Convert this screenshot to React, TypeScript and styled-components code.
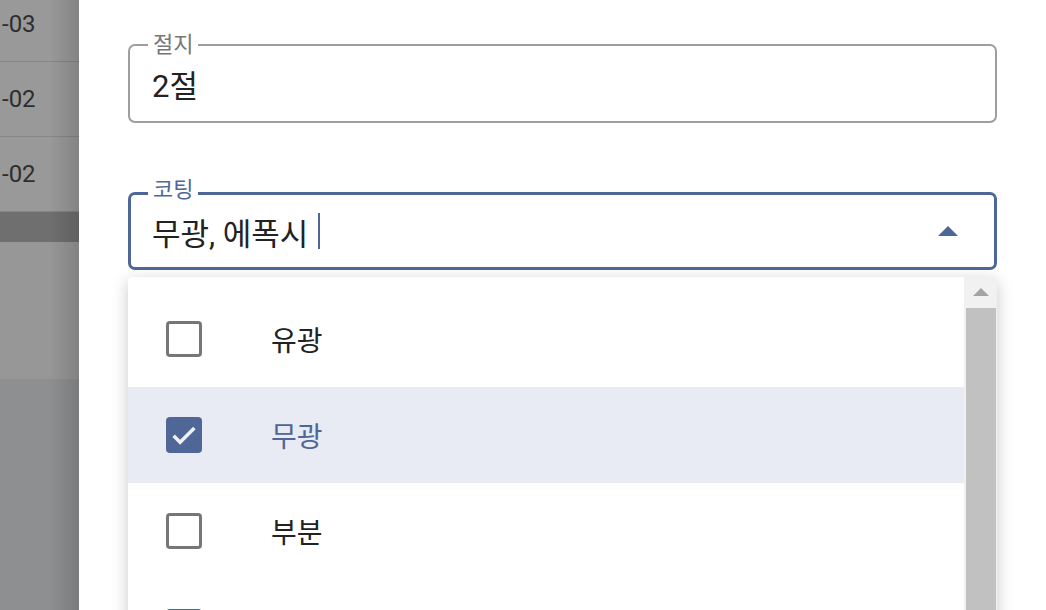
import React from "react";
import styled, {createGlobalStyle, css} from "styled-components";

const GlobalStyle = createGlobalStyle`
  html, body {
    margin: 0;
    padding: 0;
    width: 1046px;
    height: 610px;
    overflow: hidden;
    background: #ffffff;
    font-family: Roboto, "Noto Sans CJK KR", "Noto Sans", sans-serif;
  }
`

const Page = styled.div`
  display: flex;
  width: 1046px;
  height: 610px;
  overflow: hidden;
`

// table behind the drawer, dimmed by the backdrop
const Backdrop = styled.div`
  position: relative;
  width: 79px;
  flex-shrink: 0;
  display: flex;
  flex-direction: column;
  background: #8e8f91;
  overflow: hidden;

  &::after {
    content: "";
    position: absolute;
    top: 0;
    bottom: 0;
    right: 0;
    width: 30px;
    background: linear-gradient(to right, rgba(0, 0, 0, 0), rgba(0, 0, 0, 0.14));
  }
`
const TableRow = styled.div`
  height: 74px;
  flex-shrink: 0;
  display: flex;
  align-items: center;
  padding-left: 2px;
  background: #999999;
  border-bottom: 1px solid #878787;
  font-size: 24px;
  color: #2e2e2e;
  white-space: nowrap;
  ${({first}: any) => first && css`
    margin-top: -13px;
  `};
`
const TableFooter = styled.div`
  height: 30px;
  flex-shrink: 0;
  background: #6f6f6f;
`
const TableEmpty = styled.div`
  height: 137px;
  flex-shrink: 0;
  background: #979797;
`

const Drawer = styled.div`
  position: relative;
  flex: 1;
  background: #ffffff;
  padding: 44px 49px 0 49px;
  display: flex;
  flex-direction: column;
  gap: 69px;
`

const Field = styled.div`
  position: relative;
  box-sizing: border-box;
  height: ${({focused}: any) => focused ? 78 : 79}px;
  border: ${({focused}: any) => focused ? "3px solid #4f6796" : "2px solid #9e9e9e"};
  border-radius: 7px;
  display: flex;
  align-items: center;
  padding: 0 34px 0 ${({focused}: any) => focused ? 21 : 22}px;
  font-size: 31px;
  color: #222222;
`
const FieldLabel = styled.span`
  position: absolute;
  top: ${({focused}: any) => focused ? -18 : -14}px;
  left: ${({focused}: any) => focused ? 17 : 18}px;
  padding: 0 5px;
  background: #ffffff;
  font-size: 22px;
  line-height: 26px;
  color: ${({focused}: any) => focused ? "#4f6796" : "#767676"};
`
const Value = styled.span`
  flex: 1;
  display: flex;
  align-items: center;
`
const Caret = styled.span`
  display: inline-block;
  width: 2px;
  height: 36px;
  margin-left: 10px;
  background: #4f6796;
`
const Arrow = styled.span`
  width: 0;
  height: 0;
  border-left: 10px solid transparent;
  border-right: 10px solid transparent;
  border-bottom: 10px solid #4f6796;
  margin-right: 2px;
`

const Menu = styled.div`
  position: absolute;
  top: 277px;
  left: 49px;
  right: 49px;
  height: 360px;
  background: #ffffff;
  box-shadow: 0 4px 16px rgba(0, 0, 0, 0.22);
  border-radius: 4px 4px 0 0;
  display: flex;
  z-index: 2;
`
const MenuList = styled.div`
  flex: 1;
  padding-top: 14px;
  display: flex;
  flex-direction: column;
`
const Option = styled.div`
  height: 96px;
  flex-shrink: 0;
  display: flex;
  align-items: center;
  gap: 69px;
  padding-left: 38px;
  font-size: 28px;
  color: ${({selected}: any) => selected ? "#4f6796" : "#222222"};
  background: ${({selected}: any) => selected ? "#e8ebf4" : "transparent"};
`
const Box = styled.span`
  box-sizing: border-box;
  width: 36px;
  height: 36px;
  border-radius: 4px;
  border: ${({checked}: any) => checked ? "none" : "3px solid #767676"};
  background: ${({checked}: any) => checked ? "#4f6796" : "#ffffff"};
  display: flex;
  align-items: center;
  justify-content: center;
  flex-shrink: 0;
`
const Scrollbar = styled.div`
  width: 33px;
  background: #f1f1f1;
  display: flex;
  flex-direction: column;
  align-items: center;
  border-radius: 0 4px 0 0;
`
const ScrollUp = styled.span`
  width: 0;
  height: 0;
  margin: 11px 0 12px;
  border-left: 8px solid transparent;
  border-right: 8px solid transparent;
  border-bottom: 8px solid #a3a3a3;
`
const Thumb = styled.div`
  width: 30px;
  flex: 1;
  background: #c1c1c1;
`

const options = [
    {label: "유광", checked: false},
    {label: "무광", checked: true},
    {label: "부분", checked: false},
    {label: "에폭시", checked: true},
]

const App = () => {
    return <Page>
        <GlobalStyle/>
        <Backdrop>
            <TableRow first>-03</TableRow>
            <TableRow>-02</TableRow>
            <TableRow>-02</TableRow>
            <TableFooter/>
            <TableEmpty/>
        </Backdrop>
        <Drawer>
            <Field>
                <FieldLabel>절지</FieldLabel>
                <Value>2절</Value>
            </Field>
            <Field focused>
                <FieldLabel focused>코팅</FieldLabel>
                <Value>무광, 에폭시<Caret/></Value>
                <Arrow/>
            </Field>
            <Field>
                <FieldLabel>후가공</FieldLabel>
            </Field>
            <Menu>
                <MenuList>
                    {options.map(({label, checked}) => {
                        return <Option key={label} selected={label === "무광"}>
                            <Box checked={checked}>
                                {checked && <svg width="32" height="32" viewBox="0 0 24 24">
                                    <path d="M4.2 12.6l4.9 4.9L19.8 6.8" fill="none" stroke="#eef0f6"
                                          strokeWidth="2.6"/>
                                </svg>}
                            </Box>
                            {label}
                        </Option>
                    })}
                </MenuList>
                <Scrollbar>
                    <ScrollUp/>
                    <Thumb/>
                </Scrollbar>
            </Menu>
        </Drawer>
    </Page>
}

export default App
